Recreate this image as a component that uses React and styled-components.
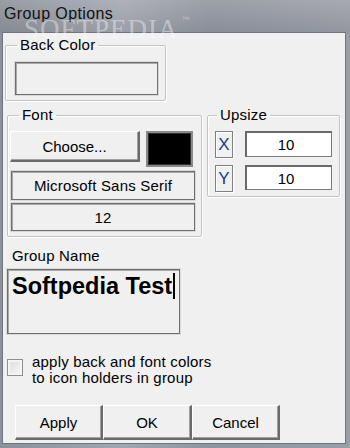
import React from 'react'
import styled, { createGlobalStyle } from 'styled-components'

const GlobalStyle = createGlobalStyle`
*{box-sizing:border-box;}
body{
margin:0;
background:#8a8f99;
font-family:"Liberation Sans", Arial, sans-serif;
}
`;

const Window = styled.div`
position:relative;
width:350px;
height:448px;
display:flex;
flex-direction:column;
overflow:hidden;
background:linear-gradient(90deg,#8b909a 0%,#a3a7b0 35%,#8f949e 60%,#9a9ea7 100%);
`;
const TitleBar = styled.div`
height:33px;
flex-shrink:0;
padding:5px 0 0 4px;
font-size:16px;
letter-spacing:0.4px;
color:#111;
background:linear-gradient(180deg,rgba(255,255,255,0.12),rgba(0,0,0,0.05));
`;
const Watermark = styled.div`
position:absolute;
left:24px;
top:16px;
z-index:2;
font-family:"Liberation Serif", serif;
font-size:27px;
line-height:1;
letter-spacing:1px;
color:rgba(255,255,255,0.4);
pointer-events:none;
sup{font-size:8px;font-family:"Liberation Sans",sans-serif;vertical-align:top;margin-left:3px;}
`;
const Client = styled.div`
margin:0 5px 5px 3px;
height:410px;
background:#f0f0f0;
box-shadow:0 0 0 1px #70747d;
padding:4px 0 0 0;
display:flex;
flex-direction:column;
font-size:15px;
color:#000;
`;
const GroupBox = styled.fieldset`
margin:${p => p.$margin || '0'};
padding:0;
width:${p => p.$w}px;
height:${p => p.$h}px;
border:1px solid #c4c4c4;
border-radius:2px;
box-shadow:inset 1px 1px 0 #fff, 1px 1px 0 #fff;
min-width:0;
`;
const Legend = styled.legend`
margin-left:${p => p.$ml || 11}px;
padding:0 3px;
font-size:15px;
line-height:16px;
letter-spacing:0.2px;
`;
const Body = styled.div`
padding:${p => p.$pad};
display:flex;
flex-direction:column;
`;
const SunkenBox = styled.div`
width:${p => p.$w}px;
height:${p => p.$h}px;
margin:${p => p.$margin || '0'};
border:1px solid #6f6f6f;
box-shadow:0 0 0 1px #d9d9d9, inset 1px 1px 0 #a9a9a9;
background:${p => p.$bg || 'transparent'};
display:flex;
align-items:center;
justify-content:center;
font-size:15px;
letter-spacing:0.2px;
`;
const Row = styled.div`
display:flex;
align-items:flex-start;
gap:${p => p.$gap || 0}px;
margin:${p => p.$margin || '0'};
`;
const Button = styled.button`
width:${p => p.$w}px;
height:${p => p.$h}px;
margin:0;
padding:0;
font-family:"Liberation Sans", Arial, sans-serif;
font-size:15px;
color:#000;
background:#f0f0f0;
border:none;
border-top:1px solid #fff;
border-left:1px solid #fff;
border-right:2px solid #6a6a6a;
border-bottom:2px solid #6a6a6a;
box-shadow:inset -1px -1px 0 #a0a0a0;
`;
const Swatch = styled.div`
width:47px;
height:36px;
background:#000;
border:2px solid #8a8a8a;
box-shadow:inset 0 0 0 1px #303030;
`;
const AxisLabel = styled.div`
width:18px;
height:27px;
border:1px solid #808080;
box-shadow:inset 1px 1px 0 #fff, 1px 1px 0 #fff;
display:flex;
justify-content:center;
padding-top:3px;
font-size:17px;
color:#1c3b8a;
`;
const NumInput = styled.div`
width:87px;
height:${p => p.$h}px;
background:#fff;
border:1px solid #7a7a7a;
border-top:2px solid #6a6a6a;
border-left:2px solid #6a6a6a;
display:flex;
align-items:center;
justify-content:center;
padding-right:6px;
font-size:15px;
`;
const Label = styled.div`
margin:${p => p.$margin || '0'};
font-size:15px;
line-height:16px;
letter-spacing:0.2px;
`;
const NameBox = styled.div`
margin:5px 0 0 4px;
width:173px;
height:65px;
border:1px solid #6f6f6f;
box-shadow:0 0 0 1px #d9d9d9, inset 1px 1px 0 #a9a9a9;
padding:2px 0 0 4px;
`;
const NameText = styled.span`
font-weight:bold;
font-size:23.5px;
line-height:28px;
border-right:2px solid #000;
padding-right:1px;
`;
const CheckRow = styled.div`
display:flex;
align-items:flex-start;
margin:20px 0 0 4px;
gap:9px;
`;
const CheckBox = styled.div`
width:16px;
height:17px;
margin-top:5px;
border:1px solid #8e8f8f;
background:linear-gradient(135deg,#dcdcdc,#f8f8f8);
box-shadow:inset 0 0 0 2px #f4f4f4;
`;
const ButtonRow = styled.div`
display:flex;
margin:19px 0 0 12px;
`;

const App = () => {
    return (
        <Window>
            <GlobalStyle/>
            <TitleBar>Group Options</TitleBar>
            <Watermark>SOFTPEDIA<sup>™</sup></Watermark>
            <Client>
                <GroupBox $w={161} $h={64} $margin="0 0 0 2px">
                    <Legend>Back Color</Legend>
                    <Body $pad="9px 0 0 9px">
                        <SunkenBox $w={143} $h={33}/>
                    </Body>
                </GroupBox>
                <Row $gap={5} $margin="6px 0 0 4px">
                    <GroupBox $w={195} $h={130}>
                        <Legend>Font</Legend>
                        <Body $pad="8px 0 0 2px">
                            <Row $gap={6}>
                                <Button $w={130} $h={31}>Choose...</Button>
                                <Swatch/>
                            </Row>
                            <SunkenBox $w={184} $h={29} $margin="4px 0 0 1px">Microsoft Sans Serif</SunkenBox>
                            <SunkenBox $w={184} $h={28} $margin="3px 0 0 1px">12</SunkenBox>
                        </Body>
                    </GroupBox>
                    <GroupBox $w={133} $h={90}>
                        <Legend $ml={9}>Upsize</Legend>
                        <Body $pad="8px 0 0 7px">
                            <Row $gap={12}>
                                <AxisLabel>X</AxisLabel>
                                <NumInput $h={26}>10</NumInput>
                            </Row>
                            <Row $gap={12} $margin="7px 0 0 0">
                                <AxisLabel>Y</AxisLabel>
                                <NumInput $h={25}>10</NumInput>
                            </Row>
                        </Body>
                    </GroupBox>
                </Row>
                <Label $margin="11px 0 0 9px">Group Name</Label>
                <NameBox>
                    <NameText>Softpedia Test</NameText>
                </NameBox>
                <CheckRow>
                    <CheckBox/>
                    <Label>apply back and font colors<br/>to icon holders in group</Label>
                </CheckRow>
                <ButtonRow>
                    <Button $w={88} $h={35}>Apply</Button>
                    <Button $w={89} $h={35}>OK</Button>
                    <Button $w={88} $h={35}>Cancel</Button>
                </ButtonRow>
            </Client>
        </Window>
    )
}

export default App
